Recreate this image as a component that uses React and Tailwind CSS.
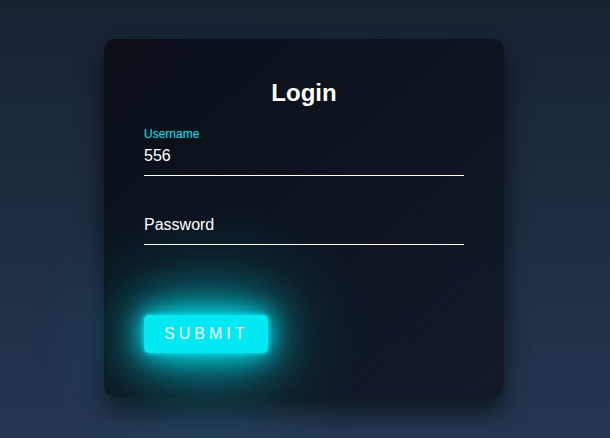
export default function App() {
  return (
    <div
      className="w-[610px] h-[438px] overflow-hidden bg-linear-to-b from-[#182233] to-[#243750] flex justify-center pt-[39px] pr-[2px]"
      style={{ fontFamily: '"Liberation Sans", Arial, sans-serif' }}
    >
      <div className="w-[400px] h-[358px] rounded-[10px] bg-linear-to-br from-[#0a0f18] via-[#0d141f] to-[#121a28] shadow-[0_15px_25px_rgba(0,0,0,0.6)] px-[40px] pt-[40px] box-border">
        <h2 className="text-[24px] leading-[normal] font-bold text-white text-center mb-[30px]">Login</h2>
        <div className="relative">
          <div className="py-[10px] text-[16px] leading-[normal] text-white border-b border-white mb-[30px]">556</div>
          <label className="absolute left-0 top-[-20px] py-[10px] text-[12px] leading-[normal] text-[#03e9f4]">Username</label>
        </div>
        <div className="relative">
          <div className="py-[10px] text-[16px] leading-[normal] text-white border-b border-white mb-[30px]">
            <span className="invisible">x</span>
          </div>
          <label className="absolute left-0 top-0 py-[10px] text-[16px] leading-[normal] text-white">Password</label>
        </div>
        <div>
          <div className="inline-block mt-[40px] px-[20px] py-[10px] text-[16px] leading-[normal] text-white tracking-[4px] rounded-[5px] bg-[#03e9f4] shadow-[0_0_5px_#03e9f4,0_0_25px_#03e9f4,0_0_50px_#03e9f4,0_0_100px_#03e9f4]">
            SUBMIT
          </div>
        </div>
      </div>
    </div>
  );
}
